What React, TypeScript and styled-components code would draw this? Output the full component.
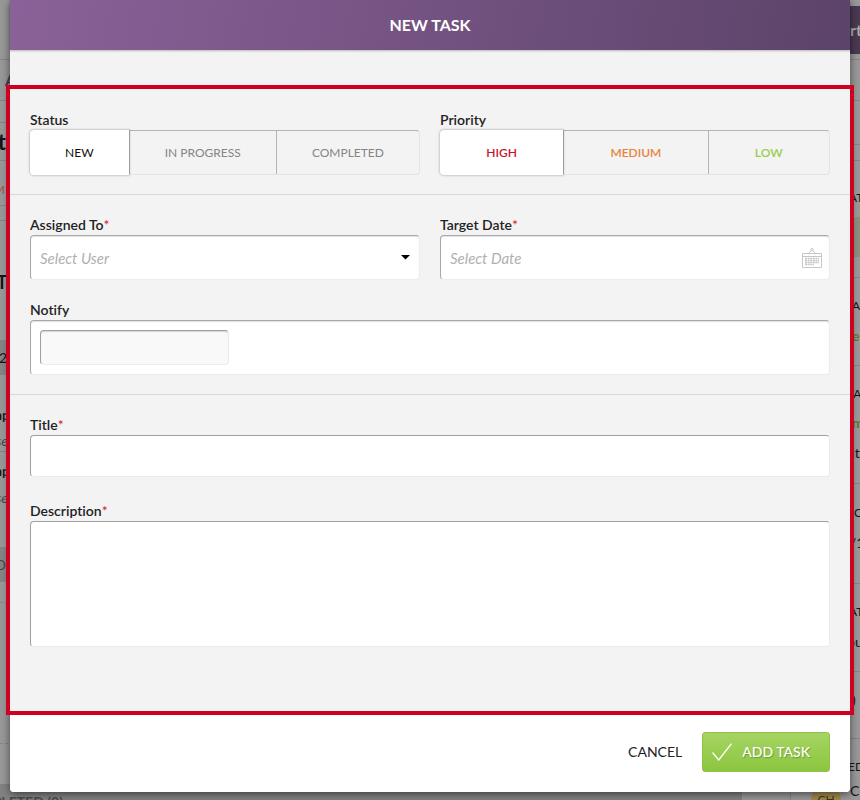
import React, { useState } from "react";
import styled, { createGlobalStyle } from "styled-components";

const GlobalStyle = createGlobalStyle`
  *, *::before, *::after { box-sizing: border-box; }
  body {
    margin: 0;
    background: #989898;
    color: #222;
    font-family: Lato, "Open Sans", sans-serif;
    font-size: 14px;
    font-variant-ligatures: none;
    line-height: 20px;
  }
  button, input, select, textarea { font: inherit; color: inherit; }
`;

const Page = styled.div`
  position: relative;
  min-height: 100vh;
  overflow: hidden;
`;

/* Dimmed task page behind the dialog */
const Backdrop = styled.div`
  position: absolute;
  inset: 0;
  overflow: hidden;
  display: grid;
  grid-template-columns: minmax(0, 1fr) 70px;
  align-items: start;
`;

const TaskColumn = styled.div`
  min-width: 0;
  margin-right: 48px;
`;

const DetailColumn = styled.div`
  min-width: 0;
  border-left: 1px solid #858585;
  background: #999;
`;

type Tone = {
  $h: number;
  $bg?: string;
  $color?: string;
  $size?: number;
  $weight?: number;
  $italic?: boolean;
  $line?: "solid" | "dashed";
};

const BackRow = styled.div<Tone>`
  display: flex;
  align-items: center;
  height: ${(p) => p.$h}px;
  overflow: hidden;
  white-space: nowrap;
  background: ${(p) => p.$bg ?? "transparent"};
  color: ${(p) => p.$color ?? "#141414"};
  font-size: ${(p) => p.$size ?? 14}px;
  font-weight: ${(p) => p.$weight ?? 400};
  font-style: ${(p) => (p.$italic ? "italic" : "normal")};
  border-bottom: ${(p) => (p.$line ? `1px ${p.$line} #858585` : "0")};
`;

const TaskText = styled.span<{ $end: number }>`
  display: flex;
  justify-content: flex-end;
  width: ${(p) => p.$end}px;
`;

const DetailText = styled.span<{ $start: number }>`
  padding-left: ${(p) => p.$start}px;
`;

const Person = styled.div`
  display: flex;
  align-items: flex-start;
  height: 39px;
  padding-left: 20px;
  gap: 9px;
  color: #141414;
`;

const Avatar = styled.span`
  flex: none;
  display: grid;
  place-items: center;
  width: 30px;
  height: 30px;
  margin-top: 4px;
  border-radius: 50%;
  background: #a08b4c;
  color: #3c351d;
  font-size: 12px;
`;

type Row = Tone & { text?: string; edge?: number };

const taskRows: Row[] = [
  { $h: 60, $line: "solid" },
  { $h: 41, text: "A", edge: 16, $color: "#4b3955", $size: 16, $weight: 700, $line: "solid" },
  { $h: 22, $line: "solid", $bg: "#999" },
  { $h: 38, text: "t", edge: 6, $size: 22, $weight: 700, $line: "solid" },
  { $h: 14 },
  { $h: 31, text: "M", edge: 5, $color: "#9c5a35", $size: 12, $line: "solid" },
  { $h: 15, $line: "solid" },
  { $h: 119, text: "T", edge: 8, $size: 20, $weight: 600 },
  { $h: 35, text: "2", edge: 7, $bg: "#858585" },
  { $h: 25 },
  { $h: 30, text: "Samp", edge: 10, $weight: 600 },
  { $h: 22, text: "Close", edge: 8, $italic: true, $color: "#484848", $line: "solid" },
  { $h: 38, text: "Samp", edge: 10, $weight: 600 },
  { $h: 16, text: "Close", edge: 8, $italic: true, $color: "#484848" },
  { $h: 41 },
  { $h: 35, text: "TO D", edge: 6, $bg: "#858585", $color: "#444" },
  { $h: 21, $line: "dashed" },
  { $h: 141, $line: "dashed" },
  { $h: 40 },
  { $h: 35, text: "COMPLETED (0)", edge: 63, $bg: "#828282", $color: "#4c4c4c", $weight: 700 },
];

const detailRows: Row[] = [
  { $h: 6 },
  { $h: 48, text: "rt", $bg: "#4a3a53", $color: "#aaa", $size: 16, $weight: 700 },
  { $h: 6, $line: "solid" },
  { $h: 41, $line: "solid" },
  { $h: 44, $line: "solid" },
  { $h: 16, $line: "solid" },
  { $h: 18 },
  { $h: 38, text: "AT", edge: 58, $size: 12 },
  { $h: 40, $bg: "#89917c" },
  { $h: 21, $line: "solid" },
  { $h: 12 },
  { $h: 32, text: "A", edge: 61, $size: 12 },
  { $h: 28, text: "e", edge: 61, $color: "#587b2a", $weight: 700 },
  { $h: 16, $line: "solid" },
  { $h: 12 },
  { $h: 32, text: "TA", edge: 56, $size: 12 },
  { $h: 26, text: "m", edge: 61, $color: "#587b2a", $weight: 700 },
  { $h: 34, text: "nt", edge: 56 },
  { $h: 14, $line: "solid" },
  { $h: 12 },
  { $h: 34, text: "C", edge: 63, $size: 12 },
  { $h: 26, text: "/1" },
  { $h: 28, $line: "solid" },
  { $h: 12 },
  { $h: 32, text: "AT", edge: 58, $size: 12 },
  { $h: 28, text: "ou", edge: 56 },
  { $h: 16, $line: "solid" },
  { $h: 12 },
  { $h: 32, text: ")", edge: 61 },
  { $h: 23, $line: "solid" },
  { $h: 14 },
  { $h: 28, text: "ED", edge: 57, $size: 12 },
];

const Dialog = styled.form`
  position: relative;
  margin: 0 10px 8px;
  background: #f3f3f3;
  border-radius: 0 0 4px 4px;
  box-shadow: 0 2px 8px rgba(0, 0, 0, 0.55);
`;

const Header = styled.header`
  display: flex;
  align-items: center;
  justify-content: center;
  height: 50px;
  background: linear-gradient(100deg, #8a6299, #5c4369);
  box-shadow: 0 1px 2px rgba(0, 0, 0, 0.25);
`;

const Heading = styled.h1`
  margin: 0;
  color: #fff;
  font-size: 16px;
  font-weight: 700;
  line-height: 20px;
`;

const Frame = styled.div`
  margin: 35px -4px 0;
  padding-top: 1px;
  border: 4px solid #cf0020;
`;

const Section = styled.section<{ $last?: boolean }>`
  display: grid;
  gap: ${(p) => (p.$last ? 24 : 20)}px;
  padding: 20px 20px ${(p) => (p.$last ? 64 : 19)}px;
  border-bottom: ${(p) => (p.$last ? "0" : "1px solid #d8d8d8")};
`;

const Columns = styled.div`
  display: grid;
  grid-template-columns: repeat(2, minmax(0, 1fr));
  gap: 20px;
`;

const Field = styled.div`
  display: flex;
  flex-direction: column;
  min-width: 0;
`;

const Label = styled.label`
  font-weight: 600;
  line-height: 20px;
`;

const Required = styled.span`
  color: #d0202e;
  font-weight: 400;
`;

const Group = styled.fieldset`
  min-width: 0;
  margin: 0;
  padding: 0;
  border: 0;
`;

const Legend = styled.legend`
  padding: 0;
  font-weight: 600;
  line-height: 20px;
`;

const Segments = styled.div`
  display: flex;
  height: 45px;
  border: 1px solid #e4e4e4;
  border-top-color: #b4b4b4;
  border-radius: 4px;
`;

const Segment = styled.label<{ $color: string; $strong?: boolean }>`
  position: relative;
  flex: 1 1 auto;
  display: flex;
  align-items: center;
  justify-content: center;
  color: ${(p) => p.$color};
  font-size: 12px;
  font-weight: ${(p) => (p.$strong ? 600 : 400)};
  cursor: pointer;

  & + & { border-left: 1px solid #b4b4b4; }

  &:has(input:checked) {
    z-index: 1;
    margin: -1px 0 -1px -1px;
    background: #fff;
    border-radius: 4px 0 0 4px;
    box-shadow: 0 0 2px 1px rgba(0, 0, 0, 0.18);
  }
`;

const Radio = styled.input`
  position: absolute;
  inset: 0;
  margin: 0;
  appearance: none;
  cursor: pointer;
`;

const Box = styled.div<{ $tall?: boolean }>`
  position: relative;
  display: flex;
  align-items: center;
  height: ${(p) => (p.$tall ? 55 : 45)}px;
  padding: ${(p) => (p.$tall ? "0 9px" : "0")};
  background: #fff;
  border: 1px solid #ececec;
  border-top-color: #a8a8a8;
  border-left-color: #a8a8a8;
  border-radius: 4px;
  box-shadow: inset 0 1px 1px rgba(0, 0, 0, 0.12);
`;

const UserSelect = styled.select`
  appearance: none;
  flex: 1;
  min-width: 0;
  height: 100%;
  padding: 0 30px 0 9px;
  border: 0;
  outline: 0;
  background: transparent;
  color: #b0b0b0;
  font-size: 15px;
  font-style: italic;
`;

const Caret = styled.svg`
  position: absolute;
  right: 9px;
  pointer-events: none;
`;

const DateInput = styled.input`
  flex: 1;
  min-width: 0;
  height: 100%;
  padding: 0 9px;
  border: 0;
  outline: 0;
  background: transparent;
  font-size: 15px;

  &::placeholder {
    color: #b0b0b0;
    font-style: italic;
    opacity: 1;
  }
`;

const CalendarIcon = styled.svg`
  flex: none;
  margin-right: 7px;
`;

const inset = `
  border: 1px solid #ececec;
  border-top-color: #a0a0a0;
  border-left-color: #a0a0a0;
  border-radius: 4px;
  outline: 0;
`;

const NotifyInput = styled.input`
  ${inset}
  width: 189px;
  height: 35px;
  padding: 0 9px;
  background: #f9f9f9;
  box-shadow: inset 0 1px 1px rgba(0, 0, 0, 0.15);
`;

const TitleInput = styled.input`
  ${inset}
  width: 100%;
  height: 42px;
  padding: 0 9px;
  background: #fff;
`;

const Description = styled.textarea`
  ${inset}
  display: block;
  width: 100%;
  height: 126px;
  padding: 9px;
  background: #fff;
  resize: none;
`;

const Footer = styled.footer`
  display: flex;
  align-items: center;
  justify-content: flex-end;
  gap: 20px;
  padding: 17px 20px 20px;
  background: #fff;
  border-radius: 0 0 4px 4px;
`;

const CancelButton = styled.button`
  padding: 0;
  border: 0;
  background: transparent;
  line-height: 20px;
  cursor: pointer;
`;

const AddButton = styled.button`
  display: flex;
  align-items: center;
  gap: 10px;
  height: 40px;
  padding: 0 19px 0 9px;
  border: 1px solid #90c24b;
  border-radius: 3px;
  background: linear-gradient(#a6d463, #8cc63f);
  color: #fff;
  font-weight: 500;
  text-shadow: 1px 1px 1px rgba(60, 100, 10, 0.45);
  cursor: pointer;
`;

function BackRows({ rows, side }: { rows: Row[]; side: "task" | "detail" }) {
  return (
    <>
      {rows.map(({ text, edge, ...tone }, i) => (
        <BackRow key={i} {...tone}>
          {text &&
            (side === "task" ? (
              <TaskText $end={edge ?? 6}>{text}</TaskText>
            ) : (
              <DetailText $start={edge ?? 59}>{text}</DetailText>
            ))}
        </BackRow>
      ))}
    </>
  );
}

type Option = { name: string; color: string; strong?: boolean };

function SegmentGroup({ title, options }: { title: string; options: Option[] }) {
  const [value, setValue] = useState(options[0].name);
  return (
    <Group>
      <Legend>{title}</Legend>
      <Segments>
        {options.map((o) => (
          <Segment key={o.name} $color={o.color} $strong={o.strong}>
            <Radio
              type="radio"
              name={title}
              checked={value === o.name}
              onChange={() => setValue(o.name)}
            />
            {o.name}
          </Segment>
        ))}
      </Segments>
    </Group>
  );
}

const statuses: Option[] = [
  { name: "NEW", color: "#111" },
  { name: "IN PROGRESS", color: "#858585" },
  { name: "COMPLETED", color: "#858585" },
];

const priorities: Option[] = [
  { name: "HIGH", color: "#c4162a", strong: true },
  { name: "MEDIUM", color: "#e8823e", strong: true },
  { name: "LOW", color: "#96cf4c", strong: true },
];

export default function App() {
  return (
    <>
      <GlobalStyle />
      <Page>
        <Backdrop aria-hidden="true">
          <TaskColumn>
            <BackRows rows={taskRows} side="task" />
          </TaskColumn>
          <DetailColumn>
            <BackRows rows={detailRows} side="detail" />
            <Person>
              <Avatar>CH</Avatar>
              Ch
            </Person>
          </DetailColumn>
        </Backdrop>

        <Dialog onSubmit={(e) => e.preventDefault()}>
          <Header>
            <Heading>NEW TASK</Heading>
          </Header>
          <Frame>
            <Section>
              <Columns>
                <SegmentGroup title="Status" options={statuses} />
                <SegmentGroup title="Priority" options={priorities} />
              </Columns>
            </Section>
            <Section>
              <Columns>
                <Field>
                  <Label htmlFor="assigned">
                    Assigned To<Required>*</Required>
                  </Label>
                  <Box>
                    <UserSelect id="assigned" defaultValue="">
                      <option value="">Select User</option>
                    </UserSelect>
                    <Caret width="9" height="5" viewBox="0 0 9 5">
                      <path d="M0 0h9L4.500 4.500z" fill="#000" />
                    </Caret>
                  </Box>
                </Field>
                <Field>
                  <Label htmlFor="target">
                    Target Date<Required>*</Required>
                  </Label>
                  <Box>
                    <DateInput id="target" placeholder="Select Date" />
                    <CalendarIcon width="20" height="20" viewBox="0 0 20 20" fill="none" stroke="#c6c6c6">
                      <path d="M.5 5.500h19v14H.5zM.5 8.500h19" />
                      <path d="M6.500 5.500 9 2.500M13.500 5.500 11 2.500" />
                      <circle cx="10" cy="1.700" r="1.200" />
                      <path
                        d="M3 10.500h14M3 12.500h14M3 14.500h14M3 16.500h9"
                        strokeDasharray="2 .6"
                        strokeWidth="1.300"
                      />
                    </CalendarIcon>
                  </Box>
                </Field>
              </Columns>
              <Field>
                <Label htmlFor="notify">Notify</Label>
                <Box $tall>
                  <NotifyInput id="notify" />
                </Box>
              </Field>
            </Section>
            <Section $last>
              <Field>
                <Label htmlFor="title">
                  Title<Required>*</Required>
                </Label>
                <TitleInput id="title" />
              </Field>
              <Field>
                <Label htmlFor="description">
                  Description<Required>*</Required>
                </Label>
                <Description id="description" />
              </Field>
            </Section>
          </Frame>
          <Footer>
            <CancelButton type="button">CANCEL</CancelButton>
            <AddButton type="submit">
              <svg width="20" height="18" viewBox="0 0 20 18" fill="none" stroke="#fff" strokeWidth="1.400">
                <path d="M.5 9.500 6.700 17 19.500.6" />
              </svg>
              ADD TASK
            </AddButton>
          </Footer>
        </Dialog>
      </Page>
    </>
  );
}
